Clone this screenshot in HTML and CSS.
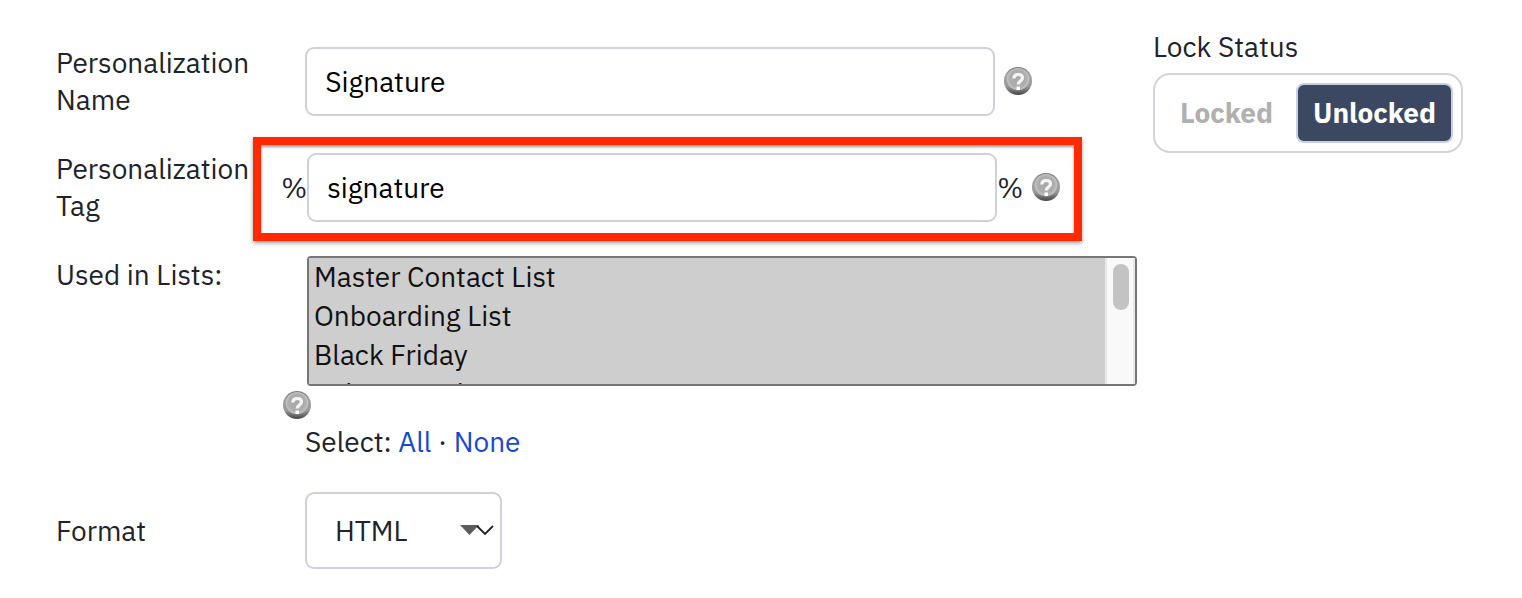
FILE: index.html
```html
<!DOCTYPE html>
<html lang="en">
  <head>
    <meta charset="UTF-8" />
    <meta name="viewport" content="width=device-width, initial-scale=1.0" />
    <title>Edit Personalization</title>
    <link rel="stylesheet" href="styles.css">
  </head>
  <body>
    <!-- shared help icon -->
    <svg class="defs" width="0" height="0" aria-hidden="true">
      <defs>
        <linearGradient id="ball" x1="0" y1="0" x2="0" y2="1">
          <stop offset="0" stop-color="#7c7c7c" />
          <stop offset="0.3" stop-color="#a2a2a2" />
          <stop offset="0.7" stop-color="#989898" />
          <stop offset="1" stop-color="#444" />
        </linearGradient>
        <radialGradient id="face" cx="0.5" cy="0.45" r="0.5">
          <stop offset="0" stop-color="#a8a8a8" />
          <stop offset="0.7" stop-color="#adadad" />
          <stop offset="0.88" stop-color="#c2c2c2" />
          <stop offset="1" stop-color="#c2c2c2" stop-opacity="0" />
        </radialGradient>
        <symbol id="help" viewBox="0 0 28 28">
          <circle cx="14" cy="14" r="14" fill="url(#ball)" />
          <circle cx="14" cy="13" r="12" fill="url(#face)" />
          <path d="M9.800 11.500C10 8.500 11.500 7.500 14 7.500S18.500 8.700 18.500 11C18.500 14 14.300 13.800 14.300 17.500" fill="none" stroke="#f4f4f4" stroke-width="3.200" />
          <rect x="12.500" y="19.500" width="3.500" height="3.500" fill="#fff" />
        </symbol>
      </defs>
    </svg>

    <form class="page">
      <div class="fields">
        <div class="row">
          <label class="label" for="name">Personalization Name</label>
          <div class="control indent">
            <input type="text" id="name" value="Signature" />
            <svg class="help"><use href="#help" /></svg>
          </div>
        </div>

        <div class="row">
          <label class="label" for="tag">Personalization Tag</label>
          <div class="control highlight">
            <span class="percent">%</span>
            <input type="text" id="tag" value="signature" />
            <span class="percent">%</span>
            <svg class="help"><use href="#help" /></svg>
          </div>
        </div>

        <div class="row">
          <label class="label" for="lists">Used in Lists:</label>
          <div class="lists">
            <div class="listbox">
              <select id="lists" multiple>
                <option selected>Master Contact List</option>
                <option selected>Onboarding List</option>
                <option selected>Black Friday</option>
                <option selected>Sales Board</option>
                <option selected>Newsletter</option>
                <option selected>Customers</option>
                <option selected>Webinar</option>
                <option selected>Trial Users</option>
              </select>
              <div class="scrollbar"></div>
            </div>
            <svg class="help"><use href="#help" /></svg>
            <p class="pick">Select: <a href="#">All</a> · <a href="#">None</a></p>
          </div>
        </div>

        <div class="row format-row">
          <label class="label" for="format">Format</label>
          <div class="indent">
            <div class="format">
              <select id="format">
                <option>HTML</option>
                <option>Text</option>
              </select>
              <svg class="arrows" viewBox="0 0 34 14">
                <path d="M0 2H19L9.500 12Z" fill="#5c5c5c" />
                <path d="M17 3L25 11L33 3" fill="none" stroke="#222" stroke-width="1.800" />
              </svg>
            </div>
          </div>
        </div>
      </div>

      <div class="status">
        <span>Lock Status</span>
        <div class="toggle">
          <button type="button">Locked</button>
          <button type="button" class="active">Unlocked</button>
        </div>
      </div>
    </form>
  </body>
</html>
```
FILE: styles.css
```css
*,
*::before,
*::after {
  box-sizing: border-box;
}

body {
  margin: 0;
  background-color: #fff;
  color: #212329;
  font-family: "IBM Plex Sans", Roboto, sans-serif;
  font-size: 28px;
  line-height: 37px;
}

.defs {
  position: absolute;
}

.page {
  display: flex;
  gap: 16px;
  padding: 28px 59px 28px 56px;
}

.fields {
  flex: 1;
  display: flex;
  flex-direction: column;
  gap: 32px;
  padding-top: 16px;
}

.row {
  display: flex;
  align-items: flex-start;
}

.label {
  flex: 0 0 225px;
  padding-right: 32px;
}

.control {
  flex: 1;
  display: flex;
  align-items: center;
  padding-top: 3px;
  padding-bottom: 2px;
}

.indent {
  padding-left: 24px;
}

input,
select,
button {
  font: inherit;
}

input {
  width: 690px;
  height: 69px;
  padding: 0 18px;
  border: 2px solid #cfd0db;
  border-radius: 9px;
  color: #000;
}

.help {
  flex: none;
  width: 28px;
  height: 28px;
  margin-left: 9px;
}

.control .help {
  margin-bottom: 2px;
}

.percent {
  width: 26px;
  text-align: center;
}

/* red callout round the tag field */
.highlight {
  position: relative;
}

.highlight::after {
  content: "";
  position: absolute;
  top: -13px;
  left: -28px;
  width: 829px;
  height: 104px;
  border: 8px solid #ff2a00;
  box-shadow: 0 2px 4px rgba(0, 0, 0, 0.4), inset 0 2px 3px rgba(0, 0, 0, 0.4);
  pointer-events: none;
}

.lists {
  flex: 1;
}

.listbox {
  position: relative;
  width: 830px;
  margin-left: 26px;
}

.lists select {
  display: block;
  width: 100%;
  height: 130px;
  padding: 0;
  border: 2px solid #767676;
  border-radius: 4px;
  background-color: #f9f9f9;
  scrollbar-width: none;
}

.lists option {
  min-height: 39px;
  padding: 0 5px 2px;
  color: #111;
}

/* always visible scrollbar over the right end of the list */
.scrollbar {
  position: absolute;
  top: 2px;
  right: 2px;
  bottom: 2px;
  width: 30px;
  padding: 6px;
  border: solid #e8e8e8;
  border-width: 0 2px;
  background-color: #f9f9f9;
  pointer-events: none;
}

.scrollbar::before {
  content: "";
  display: block;
  width: 16px;
  height: 46px;
  border-radius: 8px;
  background-color: #c3c3c3;
}

.lists .help {
  display: block;
  margin: 5px 0 0 2px;
}

.pick {
  margin: 4px 0 0 24px;
}

a {
  color: #1549cf;
  text-decoration: none;
}

.format-row {
  align-items: center;
}

.format {
  position: relative;
}

.format select {
  display: block;
  appearance: none;
  width: 197px;
  height: 77px;
  padding: 0 28px;
  border: 2px solid #cfd0db;
  border-radius: 9px;
  background-color: #fff;
  color: #212329;
}

.arrows {
  position: absolute;
  top: 31px;
  right: 8px;
  width: 34px;
  height: 14px;
  pointer-events: none;
}

.status {
  flex: 0 0 310px;
}

.toggle {
  display: flex;
  justify-content: space-between;
  margin-top: 8px;
  padding: 8px;
  border: 2px solid #d3d4da;
  border-radius: 17px;
}

.toggle button {
  height: 60px;
  padding: 0 15px 1px;
  border: 2px solid transparent;
  border-radius: 8px;
  background: none;
  color: #b0b0b0;
  font-weight: bold;
  cursor: pointer;
}

.toggle .active {
  border-color: #c9cfe2;
  background-color: #3c4761;
  color: #fff;
}
```
